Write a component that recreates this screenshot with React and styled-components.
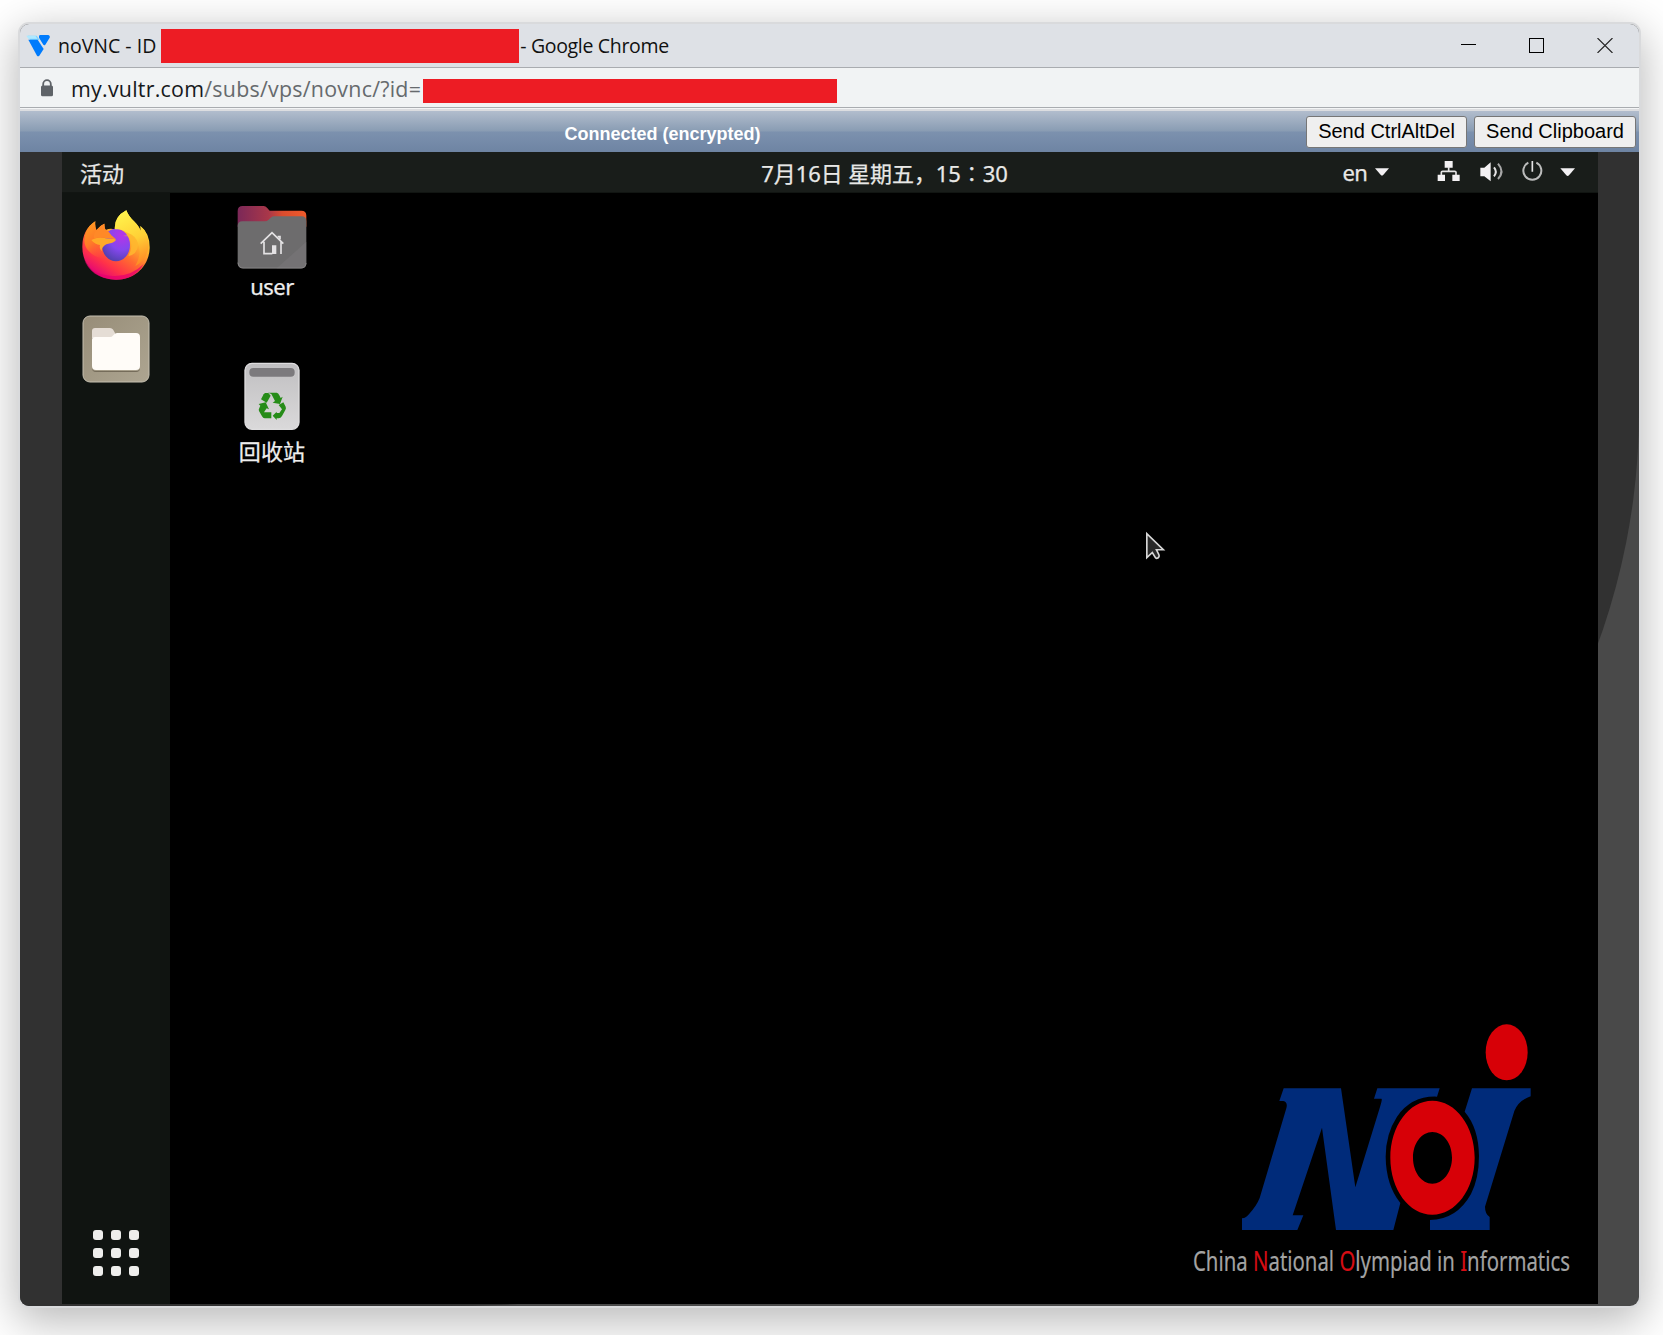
import React from "react";
import styled, { createGlobalStyle } from "styled-components";

const Global = createGlobalStyle`
  *{box-sizing:border-box}
  html,body{margin:0;height:1335px;overflow:hidden;background:#fff}
`;
const ui = `"Open Sans","Noto Sans CJK SC",sans-serif`;
const cjk = `"Noto Sans","Noto Sans CJK SC",sans-serif`;
const arial = `"Liberation Sans",Arial,sans-serif`;

const Page = styled.div`width:1663px;height:1335px;padding:24px 0 0 20px;overflow:hidden;background:#fff;`;
const Window = styled.div`
  width:1619px;height:1282px;display:flex;flex-direction:column;overflow:hidden;
  border-radius:9px;background:#494949;
  box-shadow:0 0 0 2px #d9dadc,0 12px 44px 4px rgba(0,0,0,.28);
`;
const TitleBar = styled.header`
  flex:none;height:44px;display:flex;align-items:center;background:#dee1e6;border-bottom:1px solid #a9acb0;padding-left:6px;
`;
const TitleText = styled.span`
  font:400 19.5px/26px ${ui};letter-spacing:${p => p.$ls || 0}px;color:#111;white-space:pre;margin-left:${p => p.$ml || 0}px;
`;
const Redaction = styled.span`
  display:block;flex:none;width:${p => p.$w}px;height:${p => p.$h}px;margin-left:${p => p.$ml || 0}px;
  margin-top:${p => p.$mt || 0}px;background:#ed1c24;
`;
const Controls = styled.div`margin-left:auto;display:flex;align-items:center;padding-right:26px;gap:53px;height:43px;padding-bottom:1px;`;
const AddressBar = styled.div`
  flex:none;height:40px;display:flex;align-items:center;background:#f1f3f4;border-bottom:1px solid #a9acb0;padding-left:20px;
`;
const Url = styled.span`
  font:400 21.4px/30px ${ui};letter-spacing:.25px;color:#666a6d;margin-left:17px;white-space:pre;width:352px;padding-top:2px;
  b{font-weight:400;color:#16181b}
`;
const Separator = styled.div`flex:none;height:3px;background:linear-gradient(#f4f5f6 0 1px,#dcdde0 1px);`;
const StatusBar = styled.div`
  flex:none;height:41px;display:flex;align-items:center;
  background:linear-gradient(#b2bdcd 0%,#899cb3 49%,#7c91ae 51%,#6e84a3 100%);padding-right:3px;
`;
const Status = styled.div`
  flex:1;text-align:center;font:700 18px/24px ${arial};color:#fff;padding:5px 0 0 6px;
`;
const VncButton = styled.button`
  width:${p => p.$w}px;height:32px;margin:1px 0 0 7px;padding:0 0 2px;border:1px solid #767676;border-radius:3px;background:#efefef;
  font:400 20px/24px ${arial};color:#000;white-space:nowrap;
`;
const Viewport = styled.main`
  flex:1;min-height:0;background:#313131;border-bottom-right-radius:1200px 894px;padding-left:42px;
`;
const Screen = styled.div`width:1536px;height:1152px;display:flex;flex-direction:column;background:#000;color:#f0f0ee;`;
const Panel = styled.div`
  flex:none;height:41px;display:grid;grid-template-columns:1fr auto 1fr;align-items:center;background:#191d1a;border-bottom:1px solid #111512;
  padding:0 21px 0 18px;
`;
const PanelText = styled.span`
  font:400 22px/30px ${cjk};letter-spacing:${p => p.$ls || 0}px;color:#e8e8e6;white-space:pre;
  -webkit-text-stroke:.25px #e8e8e6;
  padding-left:${p => p.$pl || 0}px;padding-right:${p => p.$pr || 0}px;padding-top:${p => p.$pt || 0}px;
`;
const Tray = styled.div`display:flex;justify-content:flex-end;align-items:center;height:40px;padding-bottom:2px;svg{display:block;flex:none}`;
const InputSource = styled.div`display:flex;align-items:center;margin-right:47px;padding-top:1px;`;
const Workspace = styled.div`flex:1;min-height:0;display:flex;`;
const Dock = styled.nav`
  width:108px;background:#101411;display:flex;flex-direction:column;align-items:center;gap:35px;padding:17px 0 28px;
  svg{display:block;flex:none}
`;
const AppGrid = styled.div`margin-top:auto;display:grid;grid-template-columns:repeat(3,10px);gap:8px;`;
const GridDot = styled.i`width:10px;height:10px;border-radius:3px;background:#eeeeec;`;
const Desktop = styled.section`flex:1;display:flex;justify-content:space-between;position:relative;`;
const Shortcuts = styled.div`width:204px;padding-top:12px;display:flex;flex-direction:column;align-items:center;`;
const Shortcut = styled.div`
  height:${p => p.$h}px;display:flex;flex-direction:column;align-items:center;gap:${p => p.$gap}px;
  font:400 22px/30px ${cjk};color:#eee;letter-spacing:${p => p.$ls || 0}px;-webkit-text-stroke:.25px #eee;svg{display:block}
`;
const LogoBox = styled.div`align-self:flex-end;width:418px;height:294px;svg{display:block}`;
const LogoCaption = styled.div`
  margin-left:13px;width:max-content;font:400 26.7px/36px ${cjk};color:#a3a3a3;white-space:pre;
  transform:scaleX(.763);transform-origin:0 0;-webkit-text-stroke:.2px currentColor;
  em{font-style:normal;color:#d70d14}
`;
const Pointer = styled.svg`position:absolute;left:975px;top:338px;`;

const Vultr = () => (
  <svg width="24" height="22" viewBox="79 101 72 66">
    <path d="M84 103h27l9 13H92z" fill="#7fd3ff" /><path d="M80 103h27l6 9H86z" fill="#aee9ff" />
    <path d="M86 115h28l18 28-13 20q-4 4-7 0z" fill="#007bfc" />
    <path d="M121 101h25q6 2 4 8l-13 21q-4 4-7-1l-12-20q-1-7 3-8z" fill="#007bfc" />
  </svg>
);
const Lock = () => (
  <svg width="14" height="18" viewBox="0 0 14 18">
    <path d="M3.2 8V5a3.8 3.8 0 0 1 7.6 0v3" fill="none" stroke="#5f6368" strokeWidth="1.8" />
    <rect x="1" y="6.5" width="12" height="10.8" rx="1.6" fill="#5f6368" />
  </svg>
);
const Firefox = () => (
  <svg width="68" height="70" viewBox="66 60 204 210">
    <defs>
      <linearGradient id="fxBody" x1=".85" y1=".15" x2=".3" y2="1">
        <stop offset="0" stopColor="#fff044" /><stop offset=".3" stopColor="#ffb52b" /><stop offset=".55" stopColor="#ff6b30" />
        <stop offset=".78" stopColor="#ff3348" /><stop offset="1" stopColor="#e3027a" />
      </linearGradient>
      <radialGradient id="fxGlobe" cx=".7" cy=".2" r=".9">
        <stop offset="0" stopColor="#b833e6" /><stop offset=".5" stopColor="#8547ee" /><stop offset="1" stopColor="#4b3fa5" />
      </radialGradient>
      <linearGradient id="fxFlame" x1=".3" y1="0" x2=".6" y2="1">
        <stop offset="0" stopColor="#fff44c" /><stop offset=".55" stopColor="#ffd036" /><stop offset="1" stopColor="#ff8b25" />
      </linearGradient>
      <linearGradient id="fxFox" x1="0" y1="0" x2=".7" y2="1">
        <stop offset="0" stopColor="#ffa01e" /><stop offset=".5" stopColor="#ff7a28" /><stop offset="1" stopColor="#ff4a3b" stopOpacity="0" />
      </linearGradient>
    </defs>
    <path d="M106 94Q104 108 109 121Q119 107 133 101Q132 113 137 120Q150 114 164 118Q162 80 199 61Q205 78 222 94Q239 111 241 123Q243 115 241 108Q270 130 269 175C267 228 225 269 169 269C111 269 67 227 67 172Q66 120 106 94Z" fill="url(#fxBody)" />
    <path d="M72 205Q91 254 151 257Q210 263 251 222Q224 270 166 269C117 268 83 244 72 205Z" fill="#e6006f" opacity=".75" />
    <path d="M106 94Q104 108 109 121Q119 107 133 101Q132 113 137 120Q155 129 168 150Q155 158 139 163Q128 184 146 202Q111 210 86 183Q65 161 78 126Q88 104 106 94Z" fill="url(#fxFox)" />
    <ellipse cx="168" cy="165" rx="42" ry="49" fill="url(#fxGlobe)" />
    <path d="M199 61Q205 78 222 94Q239 111 241 123Q243 115 241 108Q266 128 266 168Q263 208 226 228Q248 190 233 160Q222 135 202 129Q185 115 165 118Q162 80 199 61Z" fill="url(#fxFlame)" />
    <path d="M189 138L205 139Q223 165 205 198Q231 195 235 163Q229 136 202 128L178 119Q197 124 206 136Z" fill="#ffb72f" opacity=".85" />
    <path d="M94 150Q113 138 138 145L167 148Q169 154 157 158L139 163Q124 172 125 184Q117 173 120 165Q105 164 94 150Z" fill="#ffaa27" />
    <path d="M109 121Q119 107 133 101Q132 113 137 120Q148 124 154 136L168 148L135 144Q118 140 102 146Q100 130 109 121Z" fill="#ff8927" />
  </svg>
);
const Files = () => (
  <svg width="68" height="68" viewBox="0 0 68 68">
    <defs><linearGradient id="filesBg" x1="0" y1="0" x2="1" y2="1"><stop offset="0" stopColor="#978d78" /><stop offset="1" stopColor="#ada591" /></linearGradient></defs>
    <rect x="1" y="1" width="66" height="66" rx="7" fill="url(#filesBg)" stroke="#c5bfb0" strokeWidth="1" />
    <path d="M10 23V16q0-3 3-3h15q2 0 3 1.600l2 3.400v6z" fill="#e5ddd5" />
    <path d="M14 56h40q4 0 4-4v1q0 4-4 4H14q-4 0-4-4v-1q0 4 4 4z" fill="#756c5a" />
    <path d="M10 25q0-3 3-3h15q2 0 3-1.500l1-1q1-1.500 3-1.500h19q4 0 4 4v29q0 4-4 4H14q-4 0-4-4z" fill="#fffcf8" />
  </svg>
);
const HomeFolder = () => (
  <svg width="70" height="64" viewBox="531 45 210 192">
    <defs><linearGradient id="folderBack"><stop offset="0" stopColor="#7b2858" /><stop offset=".45" stopColor="#a93749" /><stop offset=".65" stopColor="#db4c2e" /><stop offset="1" stopColor="#ef5b2b" /></linearGradient></defs>
    <path d="M533 110V63q0-15 15-15h63q6 0 10 5l8 9h95q15 0 15 15v33z" fill="url(#folderBack)" />
    <path d="M533 108q0-14 14-14h67q7 0 12-5l6-6q5-4 11-4h81q15 0 15 15v126q0 15-15 15H548q-15 0-15-15z" fill="#6d6c6d" />
    <path d="M739 155L650 235h74q15 0 15-15z" fill="#7c7b7c" opacity=".45" />
    <path d="M534 218q2 16 15 16h174q14 0 15-15" fill="none" stroke="#858384" strokeWidth="3" />
    <path d="M602 161l34-33 34 33M612 155v36h25M663 155v37M653 140h7v8" fill="none" stroke="#e4e2e4" strokeWidth="5" />
    <path d="M636 166h13v26h-13z" fill="#e4e2e4" />
  </svg>
);
const Trash = () => (
  <svg width="56" height="68" viewBox="552 516 168 204">
    <defs><linearGradient id="binBody" x2="0" y2="1"><stop offset="0" stopColor="#c0bfc1" /><stop offset="1" stopColor="#dad9da" /></linearGradient></defs>
    <rect x="555" y="520" width="162" height="198" rx="21" fill="url(#binBody)" stroke="#dedddf" strokeWidth="4" />
    <rect x="568" y="534" width="136" height="26" rx="12" fill="#7c7a7d" />
    <g fill="#268c18">
      <path d="M624 608h26q5 1 8 8l4 8 6-4-8 22-22-4 7-5-11-21z" />
      <path d="M615 609h10l7 8-12 21-17-10 8-15z" />
      <path d="M596 642l21-5 10 21-7-3-8 12h22v18h-20q-5 0-8-6l-9-16q-2-5 1-9l3-7z" />
      <path d="M656 645l14-8 7 13q2 5-1 10l-10 18q-4 7-10 7h-6v5l-12-13 12-12v4h8l8-11z" />
    </g>
  </svg>
);
const NoiMark = () => (
  <svg width="418" height="233" viewBox="0 0 1254 699">
    <g fill="#002b7a">
      <path d="M311 235H483L526 532L600 291Q608 266 604 266H582L592 235H779L771 260Q695 257 651 320Q617 372 617 440Q618 525 661 579L640 660H468L426 353L338 616H370L352 660H186V625Q199 623 208 611Q230 587 239 564L319 295Q324 276 310 273H298Z" />
      <path d="M876 235H1052V259Q1016 271 1003 303L915 590Q915 612 929 621V660H750V630Q830 629 873 552Q897 504 897 438Q896 354 854 305Z" />
    </g>
    <path fillRule="evenodd" fill="#d70007" d="M757 272C827 272 884 348 884 443S827 614 757 614 631 538 631 443 687 272 757 272ZM757 366C725 366 699 400 699 443S725 521 757 521 816 486 816 443 790 366 757 366Z" />
    <ellipse cx="980" cy="127" rx="63" ry="84" fill="#d70007" />
  </svg>
);
const Caret = () => <svg width="14" height="8" viewBox="0 0 14 8"><path d="M0 .2h14L8.200 7q-1.200 1-2.400 0z" fill="#f2f0f2" /></svg>;
const TrayIcons = () => (
  <svg width="141" height="22" viewBox="520 480 423 66">
    <g fill="#f3f1f3">
      <path d="M546 483h24v20h-24zM525 524h22v19h-22zM569 524h22v19h-22z" />
      <path d="M653 503h12l19-16v57l-19-15h-12z" />
      <path d="M893 505h44l-18 21q-4 4-8 0z" />
    </g>
    <g fill="none" stroke="#e4e3e4">
      <path d="M558 500v15M536 525v-8q0-3 4-3h36q4 0 4 3v8" strokeWidth="5" />
      <path d="M694 502q11 13 0 27" strokeWidth="6" /><path d="M706 491q21 24 0 46" strokeWidth="6" opacity=".7" />
      <path d="M797 488a27 27 0 1 0 24 0" strokeWidth="6" opacity=".8" /><path d="M809 483v32" strokeWidth="5" />
    </g>
  </svg>
);

export default function App() {
  return (
    <Page>
      <Global />
      <Window>
        <TitleBar>
          <Vultr />
          <TitleText $ml={8}>noVNC - ID</TitleText>
          <Redaction $w={358} $h={34} $ml={5} $mt={1} />
          <TitleText $ml={1} $ls={-0.33}>- Google Chrome</TitleText>
          <Controls>
            <svg width="15" height="15"><path d="M0 6.500h15" stroke="#000" /></svg>
            <svg width="15" height="15"><rect x=".5" y=".5" width="14" height="14" fill="none" stroke="#000" /></svg>
            <svg width="16" height="15"><path d="M.5 0l15 15M15.500 0l-15 15" stroke="#222" strokeWidth="1.100" /></svg>
          </Controls>
        </TitleBar>
        <AddressBar>
          <Lock />
          <Url><b>my.vultr.com</b>/subs/vps/novnc/?id=</Url>
          <Redaction $w={414} $h={24} $mt={7} />
        </AddressBar>
        <Separator />
        <StatusBar>
          <Status>Connected (encrypted)</Status>
          <VncButton $w={161}>Send CtrlAltDel</VncButton>
          <VncButton $w={162}>Send Clipboard</VncButton>
        </StatusBar>
        <Viewport>
          <Screen>
            <Panel>
              <PanelText $pt={2}>活动</PanelText>
              <PanelText $pl={112} $pt={2} $ls={-0.1}>7月16日 星期五，15∶30</PanelText>
              <Tray>
                <InputSource><PanelText $pr={8} $ls={-0.8}>en</PanelText><Caret /></InputSource>
                <TrayIcons />
              </Tray>
            </Panel>
            <Workspace>
              <Dock>
                <Firefox />
                <Files />
                <AppGrid>{Array.from({ length: 9 }, (_, i) => <GridDot key={i} />)}</AppGrid>
              </Dock>
              <Desktop>
                <Shortcuts>
                  <Shortcut $h={157} $gap={2} $ls={-0.5}><HomeFolder /><span>user</span></Shortcut>
                  <Shortcut $h={110} $gap={6} $ls={0.2}><Trash /><span>回收站</span></Shortcut>
                </Shortcuts>
                <Pointer width="22" height="32" viewBox="0 0 24 34">
                  <path d="M2 2.500v26l6-5.500 3 5q1 2 3 1l1-1q1-1 0-3l-2.500-5H20z" fill="#292929" stroke="#d8d8d8" strokeWidth="1.800" />
                </Pointer>
                <LogoBox>
                  <NoiMark />
                  <LogoCaption>China <em>N</em>ational <em>O</em>lympiad in <em>I</em>nformatics</LogoCaption>
                </LogoBox>
              </Desktop>
            </Workspace>
          </Screen>
        </Viewport>
      </Window>
    </Page>
  );
}
